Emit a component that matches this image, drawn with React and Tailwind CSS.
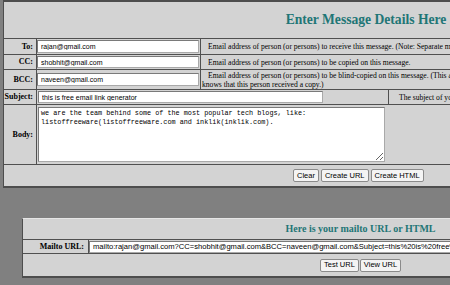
import React from "react";

const serif = { fontFamily: '"Liberation Serif", "Times New Roman", serif' };
const sans = { fontFamily: '"Liberation Sans", Arial, sans-serif' };
const mono = { fontFamily: '"Liberation Mono", "Courier New", monospace' };

function Label({ children, className = "" }) {
  return (
    <div
      style={serif}
      className={`w-[33px] shrink-0 border-r border-[#505050] flex items-center justify-end pr-[3px] text-[8px] font-bold text-black leading-none ${className}`}
    >
      {children}
    </div>
  );
}

function Field({ value, className = "" }) {
  return (
    <input
      readOnly
      value={value}
      style={sans}
      className={`bg-white border border-[#a9a9a9] border-t-[#7a7a7a] border-l-[#7a7a7a] px-[3px] text-black leading-none outline-none ${className}`}
    />
  );
}

function Btn({ children }) {
  return (
    <button
      style={sans}
      className="h-[13px] px-[3px] bg-[#f4f4f4] border border-[#8a8a8a] rounded-[2px] text-[7.5px] leading-none text-black"
    >
      {children}
    </button>
  );
}

function Desc({ children, className = "" }) {
  return (
    <div
      style={serif}
      className={`flex-1 flex items-center pl-[1px] text-[7.6px] leading-[9px] text-black indent-[6px] whitespace-nowrap ${className}`}
    >
      <span className="block">{children}</span>
    </div>
  );
}

export default function App() {
  return (
    <div className="w-[450px] h-[285px] overflow-hidden bg-[#808080]">
      {/* Top panel */}
      <div className="ml-[3px] w-[725px] bg-[#d3d3d3] border-t-2 border-l border-b-2 border-[#4d4d4d]">
        <div className="h-[37px] border-b border-[#505050] flex items-center justify-center">
          <span style={serif} className="text-[13.6px] font-bold text-[#1f7676] leading-none">
            Enter Message Details Here
          </span>
        </div>

        <div className="h-[16px] flex border-b border-[#505050]">
          <Label>To:</Label>
          <div className="w-[164px] shrink-0 border-r border-[#505050] flex items-center">
            <Field value="rajan@gmail.com" className="w-[162px] h-[13px] text-[7px]" />
          </div>
          <Desc>
            Email address of person (or persons) to receive this message. (Note: Separate multiple addresses with commas.)
          </Desc>
        </div>

        <div className="h-[15px] flex border-b border-[#505050]">
          <Label>CC:</Label>
          <div className="w-[164px] shrink-0 border-r border-[#505050] flex items-center">
            <Field value="shobhit@gmail.com" className="w-[162px] h-[12px] text-[7px]" />
          </div>
          <Desc>Email address of person (or persons) to be copied on this message.</Desc>
        </div>

        <div className="h-[20px] flex border-b border-[#505050]">
          <Label>BCC:</Label>
          <div className="w-[164px] shrink-0 border-r border-[#505050] flex items-center">
            <Field value="naveen@gmail.com" className="w-[162px] h-[13px] text-[7px]" />
          </div>
          <Desc>
            Email address of person (or persons) to be blind-copied on this message. (This address will not be shown, so nobody
            <br />
            knows that this person received a copy.)
          </Desc>
        </div>

        <div className="h-[15px] flex border-b border-[#505050]">
          <Label>Subject:</Label>
          <div className="w-[352px] shrink-0 border-r border-[#505050] flex items-center">
            <Field value="this is free email link generator" className="w-[285px] h-[12px] ml-[1px] text-[7px]" />
          </div>
          <Desc className="indent-[9px]">The subject of your message.</Desc>
        </div>

        <div className="h-[60px] flex border-b border-[#505050]">
          <Label>Body:</Label>
          <div className="flex-1 pt-[2px] pl-[1px]">
            <textarea
              readOnly
              style={mono}
              className="w-[347px] h-[55px] bg-white border border-[#a9a9a9] border-t-[#7a7a7a] border-l-[#7a7a7a] px-[2px] pt-[1px] text-[6.8px] leading-[9px] text-black outline-none block"
              defaultValue={
                "we are the team behind some of the most popular tech blogs, like:\nlistoffreeware(listoffreeware.com and inklik(inklik.com)."
              }
            />
          </div>
        </div>

        <div className="h-[21px] flex items-center gap-[2px] pl-[289px]">
          <Btn>Clear</Btn>
          <Btn>Create URL</Btn>
          <Btn>Create HTML</Btn>
        </div>
      </div>

      {/* Bottom panel */}
      <div className="mt-[30px] ml-[22px] w-[676px] bg-[#d3d3d3] border-t border-t-[#e6e6e6] border-l border-l-[#4d4d4d] border-b-2 border-b-[#4d4d4d]">
        <div className="h-[21px] border-b border-[#505050] flex items-center justify-center">
          <span style={serif} className="text-[10px] font-bold text-[#1f7676] leading-none">
            Here is your mailto URL or HTML
          </span>
        </div>
        <div className="h-[14px] flex border-b border-[#505050]">
          <div
            style={serif}
            className="w-[66px] shrink-0 border-r border-[#505050] flex items-center justify-end pr-[4px] text-[8px] font-bold text-black leading-none"
          >
            Mailto URL:
          </div>
          <div className="flex-1 flex items-center">
            <Field
              value="mailto:rajan@gmail.com?CC=shobhit@gmail.com&BCC=naveen@gmail.com&Subject=this%20is%20free%20email%20link%20generator&Body=we%20are%20the%20team"
              className="w-[600px] h-[12px] text-[7.6px]"
            />
          </div>
        </div>
        <div className="h-[22px] flex items-center gap-[1px] pl-[297px]">
          <Btn>Test URL</Btn>
          <Btn>View URL</Btn>
        </div>
      </div>
    </div>
  );
}
